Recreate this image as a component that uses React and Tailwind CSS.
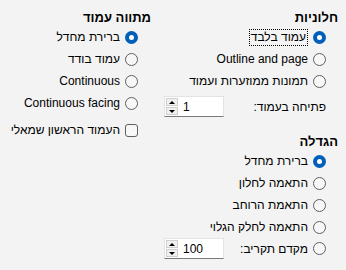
import React from 'react';

const font = { fontFamily: '"Liberation Sans", "DejaVu Sans", sans-serif' };

function Radio({ checked }) {
  if (checked) {
    return (
      <span className="w-[13px] h-[13px] shrink-0 rounded-full bg-[#005fb8] flex items-center justify-center">
        <span className="w-[5px] h-[5px] rounded-full bg-white" />
      </span>
    );
  }
  return <span className="w-[13px] h-[13px] shrink-0 rounded-full border border-[#5f5f5f] bg-[#f7f7f7]" />;
}

function RadioRow({ label, checked, focused }) {
  return (
    <div className="flex items-center h-[22px] gap-[5px]">
      <Radio checked={checked} />
      {focused ? (
        <span className="border border-dotted border-black px-[1px] leading-[15px]">{label}</span>
      ) : (
        <span className="leading-[15px]">{label}</span>
      )}
    </div>
  );
}

function Spin({ value }) {
  return (
    <div dir="ltr" className="w-[60px] h-[21px] bg-white border border-[#e3e3e3] border-b-[#7a7a7a] flex items-center">
      <div className="flex flex-col gap-[1px] ml-[1px]">
        <div className="w-[12px] h-[8px] bg-[#f0f0f0] border border-[#cfcfcf] flex items-center justify-center">
          <svg width="6" height="3" viewBox="0 0 6 3"><path d="M0 3 L3 0 L6 3 Z" fill="#000" /></svg>
        </div>
        <div className="w-[12px] h-[8px] bg-[#f0f0f0] border border-[#cfcfcf] flex items-center justify-center">
          <svg width="6" height="3" viewBox="0 0 6 3"><path d="M0 0 L3 3 L6 0 Z" fill="#000" /></svg>
        </div>
      </div>
      <span className="ml-[5px] text-[12px]">{value}</span>
    </div>
  );
}

export default function App() {
  return (
    <div
      dir="rtl"
      style={font}
      className="w-[346px] h-[270px] bg-[#f3f3f3] text-black text-[12px] flex pr-2 pt-[10px] gap-[13px]"
    >
      {/* panes + zoom */}
      <div className="w-[174px] flex flex-col">
        <div className="h-4 leading-4 font-bold text-[13px]">חלוניות</div>
        <div className="pr-3 flex flex-col">
          <RadioRow label="עמוד בלבד" checked focused />
          <RadioRow label="Outline and page" />
          <RadioRow label="תמונות ממוזערות ועמוד" />
          <div className="mt-1 flex items-center justify-between h-[21px]">
            <span>פתיחה בעמוד:</span>
            <Spin value="1" />
          </div>
        </div>

        <div className="mt-[17px] h-4 leading-4 font-bold text-[13px]">הגדלה</div>
        <div className="pr-3 flex flex-col">
          <RadioRow label="ברירת מחדל" checked />
          <RadioRow label="התאמה לחלון" />
          <RadioRow label="התאמת הרוחב" />
          <RadioRow label="התאמה לחלק הגלוי" />
          <div className="flex items-center justify-between h-[21px]">
            <div className="flex items-center gap-[5px]">
              <Radio />
              <span>מקדם תקריב:</span>
            </div>
            <Spin value="100" />
          </div>
        </div>
      </div>

      {/* page layout */}
      <div className="flex-1 flex flex-col">
        <div className="h-4 leading-4 font-bold text-[13px]">מתווה עמוד</div>
        <div className="pr-[13px] flex flex-col">
          <RadioRow label="ברירת מחדל" checked />
          <RadioRow label="עמוד בודד" />
          <RadioRow label="Continuous" />
          <RadioRow label="Continuous facing" />
          <div className="mt-[5px] flex items-center h-[22px] gap-[5px]">
            <span className="w-[13px] h-[13px] shrink-0 rounded-[3px] border border-[#5f5f5f] bg-[#f7f7f7]" />
            <span>העמוד הראשון שמאלי</span>
          </div>
        </div>
      </div>
    </div>
  );
}
